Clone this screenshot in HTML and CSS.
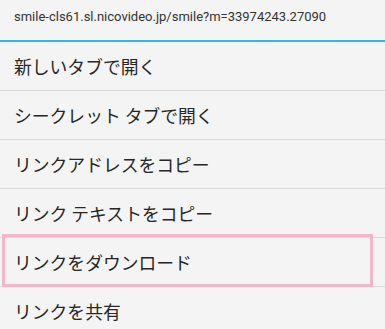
FILE: index.html
```html
<!DOCTYPE html>
<html lang="ja">
<head>
<meta charset="utf-8">
<link rel="stylesheet" href="styles.css">
</head>
<body>
<div class="menu">
  <div class="header">smile-cls61.sl.nicovideo.jp/smile?m=33974243.27090</div>
  <ul class="items">
    <li class="item">新しいタブで開く</li>
    <li class="item">シークレット タブで開く</li>
    <li class="item">リンクアドレスをコピー</li>
    <li class="item">リンク テキストをコピー</li>
    <li class="item highlighted">リンクをダウンロード<span class="mark"></span></li>
    <li class="item">リンクを共有</li>
  </ul>
</div>
</body>
</html>
```
FILE: styles.css
```css
html, body {
  margin: 0;
  padding: 0;
  background: #f4f4f4;
  width: 385px;
  height: 329px;
  overflow: hidden;
}
.menu {
  font-family: Roboto, "Noto Sans CJK JP", sans-serif;
  color: #222;
}
.header {
  height: 40px;
  line-height: 33px;
  padding-left: 14px;
  font-size: 13px;
  color: #333;
  border-bottom: 2px solid #33b5e5;
  white-space: nowrap;
}
.items {
  list-style: none;
  margin: 0;
  padding: 0;
}
.item {
  height: 48px;
  line-height: 48px;
  padding-left: 14px;
  font-size: 17.8px;
  font-family: "Noto Sans CJK JP", sans-serif;
  color: #262626;
  border-bottom: 1px solid #dadada;
  white-space: nowrap;
}
.highlighted {
  position: relative;
}
.mark {
  position: absolute;
  left: 2px;
  top: -4px;
  width: 371px;
  height: 53px;
  box-sizing: border-box;
  border: 3px solid #f5b5cb;
}
```
